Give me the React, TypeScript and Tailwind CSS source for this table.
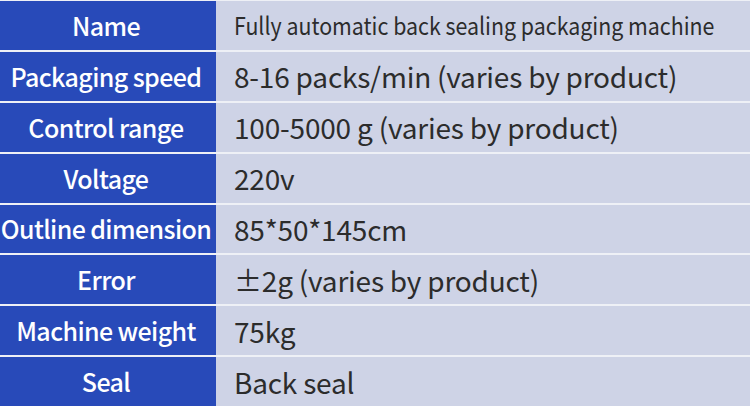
import React from "react";

type Spec = { label: string; value: string; condensed?: boolean };

const specs: Spec[] = [
  { label: "Name", value: "Fully automatic back sealing packaging machine", condensed: true },
  { label: "Packaging speed", value: "8-16 packs/min (varies by product)" },
  { label: "Control range", value: "100-5000 g (varies by product)" },
  { label: "Voltage", value: "220v" },
  { label: "Outline dimension", value: "85*50*145cm" },
  { label: "Error", value: "±2g (varies by product)" },
  { label: "Machine weight", value: "75kg" },
  { label: "Seal", value: "Back seal" },
];

export default function App() {
  return (
    <div
      className="w-[750px] h-[406px] bg-[#eef0f6] flex flex-col gap-[2px] pt-[1px] overflow-hidden"
      style={{ fontFamily: '"Noto Sans CJK SC", "Noto Sans", sans-serif' }}
    >
      {specs.map((row) => (
        <div key={row.label} className="flex-1 flex min-h-0">
          <div className="w-[216px] shrink-0 bg-[#284ab9] flex items-center justify-center pr-[4px]">
            <span className="text-white text-[25px] font-medium tracking-[-0.6px] whitespace-nowrap leading-none">
              {row.label}
            </span>
          </div>
          <div className="flex-1 bg-[#ced3e6] flex items-center pl-[18px]">
            {row.condensed ? (
              <span className="inline-block origin-left scale-x-[0.89] text-[#2c2c2c] text-[24px] whitespace-nowrap leading-none">
                {row.value}
              </span>
            ) : (
              <span className="text-[#2c2c2c] text-[28px] tracking-[-0.2px] whitespace-nowrap leading-none">
                {row.value}
              </span>
            )}
          </div>
        </div>
      ))}
    </div>
  );
}
